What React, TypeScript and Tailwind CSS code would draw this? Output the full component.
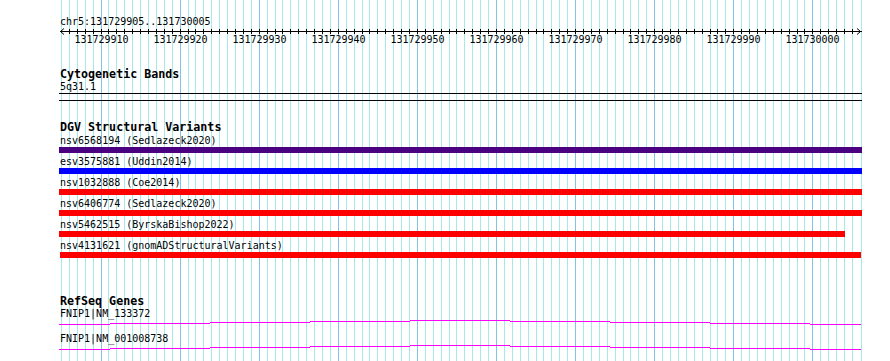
import React from "react";

// grid: one line per base, a darker one every 10 bp
const STEP = 7.909;
const gridX = Array.from({ length: 102 }, (_, k) =>
  k === 101 ? 861 : Math.round(61 + k * STEP)
);
const LEFT = 59; // left edge of the track column

const tickLabels = [
  131729910, 131729920, 131729930, 131729940, 131729950, 131729960,
  131729970, 131729980, 131729990, 131730000,
];

const variants = [
  { name: "nsv6568194 (Sedlazeck2020)", color: "bg-[#4b0082]", bar: "w-[803px]" },
  { name: "esv3575881 (Uddin2014)", color: "bg-[#0000ff]", bar: "w-[803px]" },
  { name: "nsv1032888 (Coe2014)", color: "bg-[#ff0000]", bar: "w-[803px]" },
  { name: "nsv6406774 (Sedlazeck2020)", color: "bg-[#ff0000]", bar: "w-[803px]" },
  { name: "nsv5462515 (ByrskaBishop2022)", color: "bg-[#ff0000]", bar: "w-[786px]" },
  { name: "nsv4131621 (gnomADStructuralVariants)", color: "bg-[#ff0000]", bar: "ml-px w-[801px]" },
];

// intron "hat" stepping 1px every 100px
const hatSegments = [
  [0, 51, 4],
  [51, 151, 3],
  [151, 251, 2],
  [251, 351, 1],
  [351, 451, 0],
  [451, 551, 1],
  [551, 651, 2],
  [651, 751, 3],
  [751, 802, 4],
];

function Grid() {
  return (
    <svg className="absolute inset-0" width={890} height={361} shapeRendering="crispEdges">
      {gridX.map((x, k) => (
        <rect
          key={k}
          x={x}
          y={0}
          width={1}
          height={361}
          fill={k % 10 === 5 ? "#80c4e8" : "#a6e9ec"}
        />
      ))}
    </svg>
  );
}

function Ruler() {
  return (
    <svg width={803} height={6} className="overflow-visible" shapeRendering="crispEdges">
      <rect x={1} y={3} width={802} height={1} fill="#000" />
      {gridX.slice(1, 101).map((x, k) => (
        <rect key={k} x={x - LEFT} y={1} width={1} height={5} fill="#000" />
      ))}
      <path d="M5 0.5 L1.5 3.5 L5 6.5" fill="none" stroke="#000" strokeWidth={1} shapeRendering="auto" />
      <path d="M798 0.5 L801.5 3.5 L798 6.5" fill="none" stroke="#000" strokeWidth={1} shapeRendering="auto" />
    </svg>
  );
}

function GeneLine() {
  return (
    <svg width={803} height={5} shapeRendering="crispEdges">
      {hatSegments.map(([a, b, y], i) => (
        <rect key={i} x={a} y={y} width={b - a} height={1} fill="#ff00ff" />
      ))}
    </svg>
  );
}

function Title({ children, className = "" }: { children: React.ReactNode; className?: string }) {
  return (
    <div className={"pl-px text-[11.67px] font-bold leading-[12px] whitespace-nowrap " + className}>{children}</div>
  );
}

function Label({ children, className = "" }: { children: React.ReactNode; className?: string }) {
  return <div className={"pl-px h-[12px] text-[10px] leading-[12px] whitespace-nowrap " + className}>{children}</div>;
}

export default function App() {
  return (
    <div className="relative w-[890px] h-[361px] overflow-hidden bg-white text-black font-['DejaVu_Sans_Mono',monospace]">
      <Grid />
      <div className="relative flex flex-col pl-[59px] pt-[16px]">
        <Label>chr5:131729905..131730005</Label>
        <Ruler />
        <div className="relative h-[12px] w-[803px] text-[10px] leading-[12px]">
          {tickLabels.map((v, i) => (
            <span
              key={v}
              className="absolute top-0 -translate-x-1/2"
              style={{ left: gridX[5 + i * 10] - LEFT + 0.5 }}
            >
              {v}
            </span>
          ))}
        </div>

        <Title className="mt-[22px] h-[14px]">Cytogenetic Bands</Title>
        <div className="pl-px h-[11px] text-[10px] leading-[10px]">5q31.1</div>
        <div className="h-px w-[803px] bg-black" />
        <div className="mt-[6px] h-px w-[803px] bg-black" />

        <Title className="mt-[20px] h-[14px]">DGV Structural Variants</Title>
        <div className="flex flex-col gap-[3px]">
          {variants.map((v) => (
            <div key={v.name} className="flex flex-col">
              <Label>{v.name}</Label>
              <div className={"h-[6px] " + v.color + " " + v.bar} />
            </div>
          ))}
        </div>

        <Title className="mt-[37px] h-[13px]">RefSeq Genes</Title>
        <Label>FNIP1|NM_133372</Label>
        <GeneLine />
        <Label className="mt-[8px]">FNIP1|NM_001008738</Label>
        <GeneLine />
      </div>
    </div>
  );
}
